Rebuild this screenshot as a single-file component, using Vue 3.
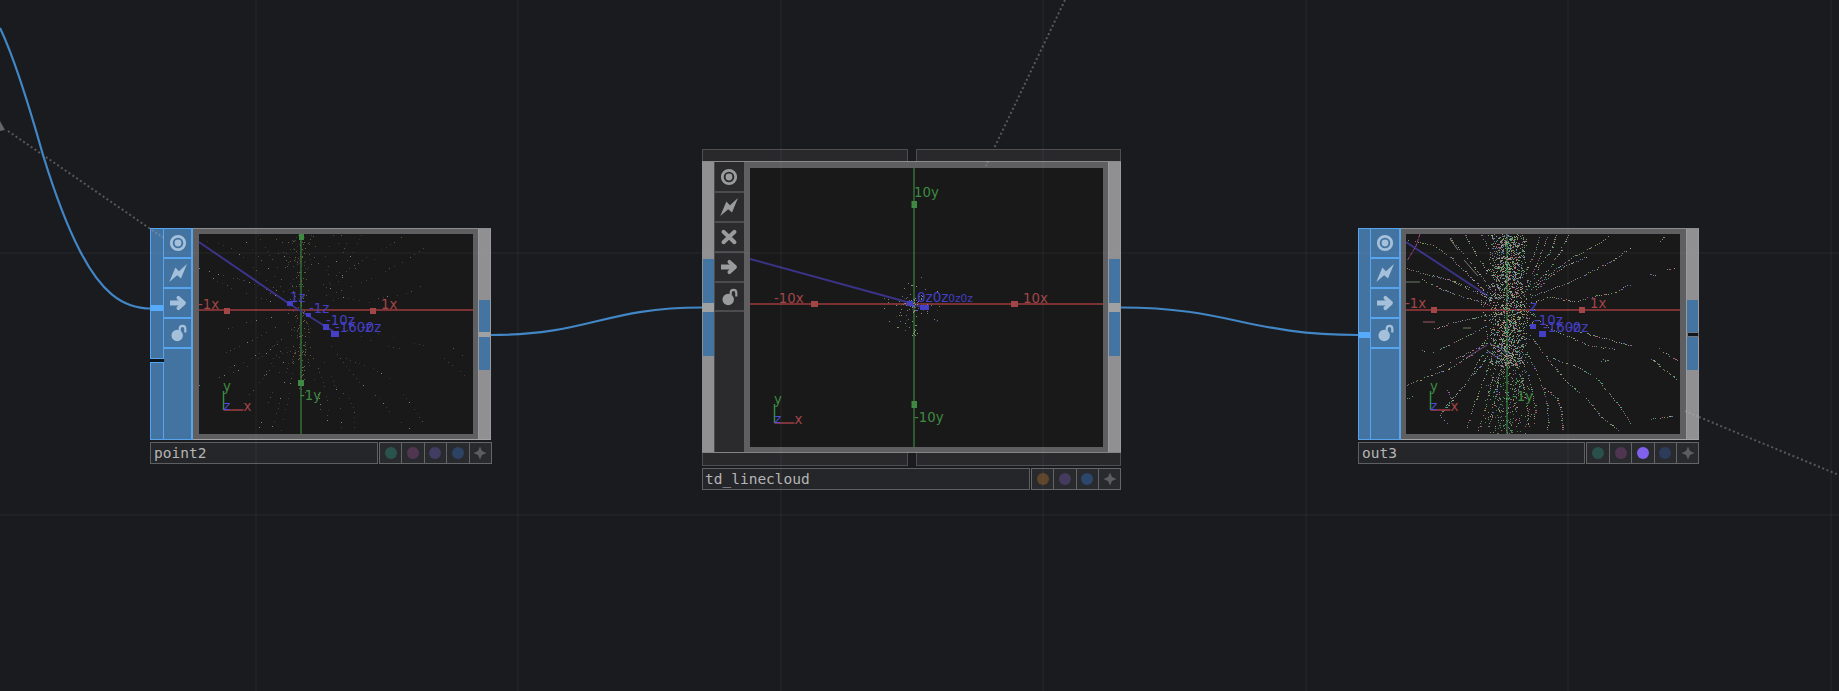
<script setup>
// Seeded generator keeps the particle clouds stable between renders
function rng(seed) {
  let s = seed
  return () => {
    s = (s * 1664525 + 1013904223) % 4294967296
    return s / 4294967296
  }
}

// Particle trails, in third-of-pixel units of a 274x200 viewport
const trails = [
  [20, 130, 90, 150, 170, 170, 260, 210],
  [25, 45, 75, 55, 105, 62, 150, 95, 200, 145, 260, 205],
  [150, 40, 170, 60, 215, 115, 265, 180],
  [195, 30, 230, 90, 270, 150],
  [245, 30, 270, 80, 290, 130],
  [100, 150, 150, 165, 200, 190, 262, 215],
  [60, 160, 130, 195, 190, 215, 262, 235],
  [105, 310, 160, 292, 265, 268],
  [65, 375, 100, 380, 150, 358, 262, 300],
  [85, 435, 150, 410, 200, 385, 265, 350],
  [20, 480, 80, 455, 150, 430, 220, 385, 265, 335],
  [215, 450, 240, 400, 268, 370],
  [140, 545, 200, 470, 250, 410, 275, 370],
  [200, 605, 225, 530, 260, 440, 280, 380],
  [235, 615, 255, 550, 275, 470, 290, 400],
  [265, 615, 285, 520, 300, 430],
  [505, 30, 480, 80, 440, 140, 400, 180],
  [470, 30, 450, 80, 420, 120, 385, 190],
  [420, 30, 405, 80, 385, 120],
  [445, 30, 425, 80, 395, 150],
  [625, 35, 580, 65, 520, 95, 470, 130, 390, 195],
  [560, 95, 500, 120, 460, 145, 400, 200],
  [690, 68, 640, 105, 590, 130, 520, 165, 460, 190, 385, 215],
  [695, 175, 640, 205, 570, 215, 530, 230, 450, 215, 390, 235],
  [400, 270, 450, 310, 520, 340, 570, 362, 650, 372],
  [540, 322, 600, 335, 650, 350, 705, 365],
  [755, 400, 790, 430, 835, 467],
  [780, 370, 820, 400, 838, 405],
  [390, 330, 450, 410, 500, 470, 560, 520, 600, 570, 660, 620],
  [460, 400, 540, 430, 590, 460, 650, 530, 695, 600],
  [430, 485, 470, 520, 485, 560, 485, 620],
  [380, 380, 410, 440, 440, 520, 445, 620],
  [365, 400, 390, 470, 405, 540, 403, 600],
  [350, 420, 380, 520, 385, 600],
  [140, 490, 155, 520, 120, 570, 145, 600],
  [755, 580, 780, 578, 820, 572],
  [22, 520, 48, 508],
  [780, 48, 795, 30],
  [752, 146, 760, 150, 772, 151],
  [803, 132, 830, 126],
  [602, 408, 610, 402, 620, 406, 608, 412]
]
const palette = ['#8f8f86', '#6f9a6b', '#a08a55', '#8a5fa0', '#5274a8', '#b0606c', '#55998f', '#a5a196', '#58a05c']

function collect(list) {
  const groups = {}
  for (const [x, y, c, w] of list) {
    if (x < 0 || y < 0) continue
    groups[c] = (groups[c] || '') + `M${Math.round(x)} ${Math.round(y) + 0.5}h${w || 1}`
  }
  return Object.entries(groups).map(([color, d]) => ({ color, d }))
}

function walk(points, step, fn) {
  for (let i = 0; i + 3 < points.length; i += 2) {
    const [x0, y0, x1, y1] = points.slice(i, i + 4)
    const n = Math.max(1, Math.round(Math.hypot(x1 - x0, y1 - y0) / step))
    for (let k = 0; k < n; k++) fn(x0 + ((x1 - x0) * k) / n, y0 + ((y1 - y0) * k) / n)
  }
}

function denseCloud() {
  const r = rng(71)
  const out = []
  const pick = () => palette[Math.floor(r() * palette.length)]
  for (const t of trails) {
    walk(t, 7, (x, y) => {
      if (r() < 0.83) out.push([(x - 19) / 3 + r() * 0.8 - 0.4, (y - 27) / 3 + r() * 0.8 - 0.4, pick(), r() < 0.2 ? 2 : 1])
    })
  }
  for (let i = 0; i < 1600; i++) {
    const g = (r() + r()) - 1
    const y = 27 + r() * 395
    const wide = 62 + 30 * Math.exp(-(((y - 240) / 80) ** 2))
    out.push([(324 + g * wide - 19) / 3, (y - 27) / 3, pick(), r() < 0.12 ? 2 : 1])
  }
  for (let i = 0; i < 330; i++) {
    const y = 400 + r() * 225
    const g = (r() + r()) - 1
    out.push([(325 + g * 75 - 19) / 3, (y - 27) / 3, r() < 0.4 ? '#3f8446' : pick()])
  }
  return collect(out)
}

function sparseCloud() {
  const r = rng(19)
  const out = []
  const dim = ['#3c3c36', '#34452f', '#4c4330', '#3a3343', '#575748', '#2c3037']
  const pick = () => dim[Math.floor(r() * dim.length)]
  for (const t of trails.slice(0, 34)) {
    walk(t, 15, (x, y) => {
      if (r() < 0.62) out.push([(x - 19) / 3, (y - 27) / 3, r() < 0.14 ? '#85806a' : pick()])
    })
  }
  for (let i = 0; i < 170; i++) {
    const g = (r() + r() + r()) / 1.5 - 1
    out.push([(308 + g * 75 - 12) / 3, (r() * 390) / 3, r() < 0.25 ? '#7a5038' : pick()])
  }
  for (let i = 0; i < 75; i++) out.push([99 + r() * 7, r() * 160, r() < 0.5 ? '#46703f' : '#6d6543'])
  return collect(out)
}

function tinyCloud() {
  const r = rng(5)
  const out = []
  const tones = ['#8d8d78', '#5f8f5a', '#8a6d9e', '#5b5bb0', '#77705a', '#33402f']
  for (let i = 0; i < 105; i++) {
    const a = r() * Math.PI * 2
    const d = Math.pow(r(), 1.3) * 30
    out.push([163 + Math.cos(a) * d, 137 + Math.sin(a) * d, tones[Math.floor(r() * tones.length)]])
  }
  for (let i = 0; i < 22; i++) out.push([161 + r() * 6, 116 + r() * 52, '#7fa070'])
  return collect(out)
}

const red = 'red', green = 'green', blue = 'violet'
const nodes = [
  {
    id: 'point', name: 'point2', active: true,
    icons: ['ring', 'bolt', 'arrow', 'lock'],
    split: true,
    swatches: ['#2b534d', '#513651', '#413c62', '#2d4365'],
    w: 274, h: 200, cloud: sparseCloud(),
    hx: 76, vx: 102, zline: 'M0 8L92 71L137 99',
    marks: [[25, 74, 6, 6, red], [171, 74, 6, 6, red], [100, 0, 5, 6, green], [99, 146, 6, 6, green], [88, 67, 6, 5, blue], [107, 79, 5, 4, blue], [124, 90, 6, 6, blue], [132, 97, 8, 6, blue]],
    labels: [[-1, 75, '-1x', red], [182, 75, '1x', red], [101, 166, '-1y', green], [91, 68, '1z', blue], [110, 79, '-1z', blue], [127, 91, '-10z', blue], [136, 98, '-160z', blue], [162, 98, '-0z', blue]],
    gizmo: [24.5, 176]
  },
  {
    id: 'cloud', name: 'td_linecloud', active: false, tabs: true,
    icons: ['ring', 'bolt', 'cross', 'arrow', 'lock'],
    inLinked: true,
    swatches: ['#5f462b', '#443b5e', '#2c466c'],
    w: 353, h: 279, cloud: tinyCloud(),
    hx: 136, vx: 164, zline: 'M0 91L157 134L174 140',
    marks: [[61, 133, 7, 6, red], [261, 133, 7, 6, red], [161.5, 33, 5.5, 7, green], [161.5, 233, 5.5, 7, green], [157, 133, 6, 5, blue], [170, 137, 9, 5, blue]],
    labels: [[24, 135, '-10x', red], [273, 135, '10x', red], [164, 28.5, '10y', green], [164, 254, '-10y', green]],
    gizmo: [24.5, 255]
  },
  {
    id: 'out', name: 'out3', active: true,
    icons: ['ring', 'bolt', 'arrow', 'lock'],
    outSplit: true,
    swatches: ['#2a504b', '#4f3550', '#8061ec', '#2d3c5b'],
    w: 274, h: 200, cloud: denseCloud(),
    hx: 76, vx: 101, zline: 'M0 8L82 62',
    extra: true,
    marks: [[25, 73, 6, 6, red], [173, 73, 6, 6, red], [124, 90, 6, 5, blue], [133, 97, 7, 6, blue]],
    labels: [[-1, 74, '-1x', red], [184, 74, '1x', red], [106, 167, '-1y', green], [124, 77, 'z', blue], [128, 91, '-10z', blue], [137, 98, '-160z', blue], [162, 98, '-0z', blue]],
    gizmo: [24.5, 176]
  }
]
const gridX = [256, 518, 781, 1043, 1306, 1568, 1831]
const gridY = [253, 515]
</script>

<template>
  <main class="network">
    <svg class="layer" width="1839" height="691" viewBox="0 0 1839 691">
      <path class="link" d="M8 131L152 230" />
      <path class="link" d="M1065 0L988 161" />
      <path class="link" d="M1699 417L1839 475" />
      <path d="M0 121L5 130L0 131Z" fill="#62666d" />
      <g class="wire">
        <path d="M0 28C14 57 30 109 43 155C55 194 67 226 80 251C100 290 121 308.500 151 308.500" />
        <path d="M491 335C590 335 603 307.500 702 307.500" />
        <path d="M1121 307.500C1230 307.500 1248 335 1358 335" />
      </g>
    </svg>

    <section v-for="n in nodes" :key="n.id" class="node" :class="[n.id, { active: n.active }]">
      <div v-if="n.tabs" class="tabs top"><i></i><i></i></div>
      <div class="body">
        <div class="input">
          <template v-if="n.split">
            <span class="port first"><b class="plug"></b></span><span class="gap"></span><span class="port"></span>
          </template>
          <template v-else-if="n.inLinked">
            <span class="pad"></span><span class="socket"></span><span class="join"></span><span class="socket"></span><span class="pad"></span>
          </template>
          <span v-else class="port single"><b class="plug"></b></span>
        </div>
        <div class="flags">
          <span v-for="icon in n.icons" :key="icon" class="flag">
            <svg width="22" height="22" viewBox="-11 -11 22 22">
              <template v-if="icon === 'ring'">
                <circle r="6.700" fill="none" stroke="currentColor" stroke-width="2.800" />
                <circle r="3.400" fill="currentColor" />
              </template>
              <path v-else-if="icon === 'bolt'" d="M9 -9L3 5.600L-.8 2.200L-8.700 9L-2.600 -5.600L.9 -1.800Z" fill="currentColor" />
              <path v-else-if="icon === 'cross'" d="M-5.500 -5.200L5.500 5.200M5.500 -5.200L-5.500 5.200" fill="none" stroke="currentColor" stroke-width="4" stroke-linecap="round" />
              <g v-else-if="icon === 'arrow'">
                <path d="M-8 -2.500H3V2.500H-8Z" fill="currentColor" />
                <path d="M.4 -5.200L6 0L.4 5.200" fill="none" stroke="currentColor" stroke-width="3.800" stroke-linejoin="round" stroke-linecap="round" />
              </g>
              <g v-else>
                <circle cx="-.8" cy="2.500" r="5.700" fill="currentColor" />
                <path d="M1.700 -1.500V-4.300A2.800 2.800 0 0 1 7.300 -4.300V-.6" fill="none" stroke="currentColor" stroke-width="2.200" />
              </g>
            </svg>
          </span>
        </div>
        <div class="frame">
          <svg class="view" :width="n.w" :height="n.h" :viewBox="`0 0 ${n.w} ${n.h}`">
            <path :d="`M0 ${n.hx}H${n.w}`" stroke="#7c3234" stroke-width="2" />
            <path :d="`M${n.vx} 0V${n.h}`" stroke="#2d592f" stroke-width="2" />
            <path :d="n.zline" fill="none" stroke="#3a3388" stroke-width="2" />
            <g v-if="n.extra" fill="none" stroke-width="1">
              <path d="M14 0L10 12L1 27" stroke="#99467f" stroke-dasharray="4 1" />
              <path d="M0 48H14M57 94H65" stroke="#6c7b66" />
              <path d="M17 88H29" stroke="#9a5869" />
              <path d="M60 124L81 111" stroke="#6c4a82" />
              <path d="M44 5L52 16M58 26L72 42" stroke="#77777c" />
              <path d="M84 110l10 4l9 8m-21-5l8 6l6 -2" stroke="#6262a0" />
            </g>
            <path v-for="g in n.cloud" :key="g.color" :d="g.d" :stroke="g.color" shape-rendering="crispEdges" />
            <rect v-for="(m, i) in n.marks" :key="'m' + i" :x="m[0]" :y="m[1]" :width="m[2]" :height="m[3]" :class="m[4]" />
            <text v-for="(l, i) in n.labels" :key="'l' + i" :x="l[0]" :y="l[1]" :class="l[3]">{{ l[2] }}</text>
            <text v-if="n.id === 'cloud'" class="violet far" x="167" y="134">0z0z<tspan class="small">0z0z</tspan></text>
            <g :transform="`translate(${n.gizmo[0]} ${n.gizmo[1]})`">
              <path d="M0 0V-19" stroke="#358b42" stroke-width="1.500" />
              <path d="M0 0H20" stroke="#a13e43" stroke-width="1.500" />
              <text class="green" x="-.5" y="-19">y</text>
              <text class="red" x="20" y="1">x</text>
              <text class="violet z" x="0" y="0">z</text>
            </g>
          </svg>
        </div>
        <div class="output">
          <span class="pad"></span><span class="socket"></span><span class="join" :class="{ slit: n.outSplit }"></span><span class="socket"></span><span class="pad"></span>
        </div>
      </div>
      <div v-if="n.tabs" class="tabs bottom"><i></i><i></i></div>
      <footer class="foot">
        <div class="name">{{ n.name }}</div>
        <div class="swatches">
          <span v-for="c in n.swatches" :key="c"><i :style="{ background: c }"></i></span>
          <span><svg width="14" height="14" viewBox="-7 -7 14 14"><path d="M0 -6.500L2 -2L6.500 0L2 2L0 6.500L-2 2L-6.500 0L-2 -2Z" fill="#5c5d60" /></svg></span>
        </div>
      </footer>
    </section>

    <svg class="layer grid" width="1839" height="691" viewBox="0 0 1839 691">
      <path v-for="x in gridX" :key="'x' + x" :d="`M${x} 0V691`" />
      <path v-for="y in gridY" :key="'y' + y" :d="`M0 ${y}H1839`" />
      <path class="over" d="M152 230L164 238M988 161L986 166M1685 411L1699 417" />
    </svg>
  </main>
</template>

<style>
html, body { background: #1a1b1e; }
</style>

<style scoped>
* { box-sizing: border-box; }
.network { position: relative; width: 1839px; height: 691px; overflow: hidden; background: #1a1b1e; }
.layer { position: absolute; inset: 0; pointer-events: none; }
.grid path { stroke: rgba(180, 190, 210, .045); stroke-width: 2; fill: none; }
.grid .over { stroke: rgba(190, 190, 190, .3); stroke-dasharray: 2 2; }
.link { stroke: #56585b; stroke-width: 2; stroke-dasharray: 2 2.6; fill: none; }
.wire path { stroke: #4286c6; stroke-width: 2.2; fill: none; }

.node { position: absolute; display: flex; flex-direction: column; }
.point { left: 150px; top: 228px; width: 341px; }
.out { left: 1358px; top: 228px; width: 341px; }
.cloud { left: 702px; top: 149px; width: 419px; }

.body { display: flex; height: 212px; background: #5f5f61; border-top: 1px solid #8c8d8f; border-bottom: 1px solid #a2a3a5; }
.cloud .body { height: 292px; border-top-color: #8a8a8c; border-bottom-color: #858587; }
.input { width: 14px; flex: none; display: flex; flex-direction: column; background: #909092; }
.active .input { margin: -1px 0; background: #1a1b1e; }
.out .input { width: 13px; }
.cloud .input { width: 12px; }
.port { display: flex; border: 1px solid #57a5ee; background: #4373a0; flex: 1; }
.port.first { flex: none; height: 131px; padding-top: 76px; }
.port.single { padding-top: 103px; }
.gap { height: 3px; background: #0c151e; }
.plug { width: 100%; height: 6px; background: #58abfb; }
.flags { width: 30px; flex: none; display: flex; flex-direction: column; background: #2b2b2e; color: #9a9b9c; border-left: 1px solid #4b4b4e; padding-top: 1.500px; }
.active .flags { margin: -1px 0; padding-top: .5px; background: #4373a0; color: #a4c0da; border: 1px solid #57a5ee; border-width: 1px 2px 1px 0; }
.point .flags { width: 29px; }
.flag { height: 29.8px; display: flex; align-items: center; justify-content: center; border-bottom: 2px solid #4c4c4f; }
.cloud .flag { padding-right: 2px; }
.frame { flex: 1; padding: 5px 0 0 5px; display: flex; }
.active .flag { border-bottom-color: #57a5ee; }
.point .frame { padding-left: 6px; }
.out .frame { padding-left: 5px; }
.cloud .frame { padding: 6px 0 0 6px; }
.view { display: block; flex: none; background: #191919; overflow: hidden; }
.output { width: 13px; flex: none; display: flex; flex-direction: column; background: #909092; border: 1px solid #9b9b9d; border-width: 0 1px; }
.pad { flex: none; height: 71px; }
.active .output .pad:last-child { flex: 1; height: auto; }
.cloud .pad { height: 97px; }
.socket { flex: none; height: 32px; background: #4374a2; }
.join { flex: none; height: 5px; background: #a0a1a3; }
.slit { background: #10171e; border: 1px solid #75777b; margin-right: -1px; }
.active .join { height: 5px; }
.active .output .socket:nth-of-type(4) { height: 33px; }
.cloud .socket { height: 44px; }
.cloud .input .socket { margin-left: 1px; }
.cloud .join { height: 9px; }

.tabs { display: flex; gap: 8px; height: 12px; }
.tabs i { flex: 1; border: 1px solid #4e4e51; background: #29292c; }
.tabs.top i { border-bottom: 0; }
.tabs.bottom { height: 13px; }
.tabs.bottom i { border-top: 0; }

.foot { display: flex; gap: 1px; height: 22px; margin-top: 1.5px; }
.cloud .foot { margin-top: 2px; }
.point .foot { margin-right: -.5px; }
.name { flex: 1; border: 1px solid #5e5f61; background: #252629; color: #b5b5b5; font: 14.5px/20px "DejaVu Sans Mono", monospace; padding-left: 3px; }
.cloud .name { padding-left: 2px; }
.swatches { display: flex; border: 1px solid #646567; background: #292a2d; }
.swatches span { width: 22.4px; display: flex; align-items: center; justify-content: center; border-right: 1px solid #636466; }
.swatches span:last-child { border: 0; width: 21px; }
.swatches i { width: 12px; height: 12px; border-radius: 50%; }

text { font: 13.3px "DejaVu Sans", sans-serif; }
.red { fill: #a24547; }
.green { fill: #3e8a42; }
.violet { fill: #443fc4; }
.far { font-size: 13.5px; }
.small { font-size: 10.5px; }
text.z { font-size: 13px; fill: #4c49dc; }
</style>
